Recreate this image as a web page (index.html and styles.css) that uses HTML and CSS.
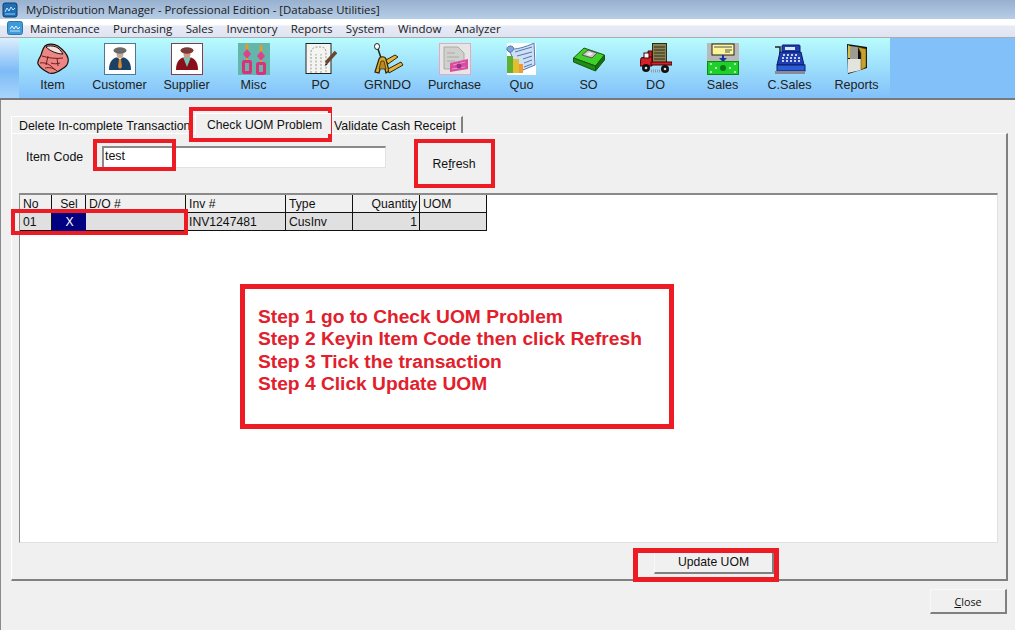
FILE: index.html
```html
<!DOCTYPE html>
<html lang="en">
<head>
  <meta charset="UTF-8">
  <meta name="viewport" content="width=device-width, initial-scale=1.0">
  <title>MyDistribution Manager - Professional Edition - [Database Utilities]</title>
  <link rel="stylesheet" href="styles.css">
</head>
<body>
  <div class="app">

    <div class="titlebar">
      <svg class="app-icon" width="16" height="16" viewBox="0 0 16 16"><rect x="1" y="1" width="14" height="14" rx="2" fill="#1f6fb5" stroke="#0d3f73"/><path d="M3 10l2-4 2 3 2-4 2 3 2-2" fill="none" stroke="#cfe9ff"/><path d="M3 12h10" stroke="#8fd0ff"/></svg>
      <span>MyDistribution Manager - Professional Edition - [Database Utilities]</span>
    </div>

    <div class="menubar">
      <svg class="menu-icon" width="16" height="16" viewBox="0 0 16 16"><rect x="0.5" y="1.5" width="15" height="13" rx="2" fill="#3f9ad8" stroke="#2a78b8"/><path d="M3 9l2-3 2 3 2-3 2 3 2-2" fill="none" stroke="#e6f6ff"/><path d="M3 11h10" stroke="#bfe6ff"/></svg>
      <span>Maintenance</span>
      <span>Purchasing</span>
      <span>Sales</span>
      <span>Inventory</span>
      <span>Reports</span>
      <span>System</span>
      <span>Window</span>
      <span>Analyzer</span>
    </div>

    <div class="toolbar">
      <div class="toolbar-edge"></div>
      <div class="tools">
        <div class="tool">
          <svg viewBox="0 0 32 32"><path d="M8 3c3-3 9-2 13 0 4 3 9 8 10 12 1 5-2 9-6 11-4 3-9 5-13 4-4-2-9-5-11-9-1-4 2-6 3-9 1-3 2-7 4-9z" fill="#ec8684" stroke="#111" stroke-width="1.200"/><path d="M9 4c3-2 9-1 12 1 2 2 4 4 5 6-6 0-13-3-17-7z" fill="#f4e0dc" stroke="#111"/><path d="M5 13c6 2 14 3 21 2M3 20c6-1 11 2 15 7M11 13l-2 9M20 15l1 8M8 25c4-1 9 0 12 3M14 20c3 1 6 1 9 0" fill="none" stroke="#6e1c1c"/></svg>
          <span>Item</span>
        </div>
        <div class="tool">
          <svg viewBox="0 0 32 32"><rect x="0.500" y="0.500" width="31" height="31" fill="#fff" stroke="#4f7696"/><path d="M5 27c0-9 4-13 11-13s11 4 11 13z" fill="#1a4266"/><path d="M13 14h6l-3 3z" fill="#e8e8e0"/><path d="M15 16h2l1 8-2 2-2-2z" fill="#e08a30"/><ellipse cx="16" cy="11" rx="3.500" ry="4" fill="#c9ab92"/><ellipse cx="16" cy="7.500" rx="6.500" ry="3.200" fill="#6a6a6a"/></svg>
          <span>Customer</span>
        </div>
        <div class="tool">
          <svg viewBox="0 0 32 32"><rect x="0.500" y="0.500" width="31" height="31" fill="#fff" stroke="#8c3a44"/><path d="M5 27c0-9 4-13 11-13s11 4 11 13z" fill="#8a0f1c"/><path d="M12 14h8l-4 10z" fill="#6fc7b5"/><ellipse cx="16" cy="11" rx="3.500" ry="4" fill="#cf9a86"/><ellipse cx="16" cy="7.500" rx="6.500" ry="3.200" fill="#7a3a36"/></svg>
          <span>Supplier</span>
        </div>
        <div class="tool">
          <svg viewBox="0 0 32 32"><rect width="32" height="32" fill="#62b6ac"/><path d="M9 1v6M23 2v7" stroke="#d9a030" stroke-width="3"/><path d="M9 6l4 5-4 5-4-5zM23 8l4 5-4 5-4-5z" fill="#e0408a"/><path d="M9 15v4M23 17v4" stroke="#d9a030" stroke-width="2"/><rect x="5.500" y="18.500" width="7" height="11" rx="1" fill="none" stroke="#dc2f7c" stroke-width="3"/><rect x="19.500" y="20.500" width="7" height="10" rx="1" fill="none" stroke="#dc2f7c" stroke-width="3"/></svg>
          <span>Misc</span>
        </div>
        <div class="tool">
          <svg viewBox="0 0 32 32"><rect x="1" y="0.500" width="25" height="30" fill="#f4f4f0" stroke="#222"/><path d="M6 30V9c0-3 3-5 6-5h4c3 0 5 2 5 5v21M11 30V11M16 30V11" fill="none" stroke="#999" stroke-dasharray="2 1.500"/><path d="M21 20L31 9" stroke="#6b4630" stroke-width="3.500"/><path d="M21 20l-1.500 3 3-1.500z" fill="#222"/></svg>
          <span>PO</span>
        </div>
        <div class="tool">
          <svg viewBox="0 0 32 32"><ellipse cx="5" cy="3.500" rx="2.500" ry="3" fill="#fff" stroke="#222"/><path d="M6 6l3 9" stroke="#222" stroke-width="1.500"/><path d="M3 29l4-13c1-3 6-3 7 0l3 12-3 2-2-8h-3l-2 8z" fill="#dca92c" stroke="#2e2206" stroke-width="1.200"/><path d="M7 26l2-8h3l2 8z" fill="#b98a1c" stroke="#2e2206" stroke-width="0.700"/><path d="M14 17l9-5 3 2-10 7zM16 26l13-7 2 3-14 8z" fill="#e4b53a" stroke="#2e2206"/></svg>
          <span>GRNDO</span>
        </div>
        <div class="tool">
          <svg viewBox="0 0 32 32"><rect x="0.500" y="0.500" width="31" height="31" fill="#e8e6e4" stroke="#e8a8c4"/><path d="M5 4h14l6 6v16H5z" fill="#d0d0cc" stroke="#aaa"/><path d="M8 10h8M8 14h12M8 18h8" stroke="#aaa"/><path d="M11 20l18-4v10l-18 3z" fill="#d84fa0"/><path d="M14 22l12-3M13 26l13-2" stroke="#f08fc8"/><circle cx="20" cy="23" r="2.500" fill="#9a2f8c"/></svg>
          <span>Purchase</span>
        </div>
        <div class="tool">
          <svg viewBox="0 0 32 32"><rect x="1" y="0" width="29" height="32" fill="#fff"/><path d="M3 6c6 1 17-2 25-6l1 22-17 7z" fill="#cfe0f5" stroke="#4f77b0"/><path d="M1 7c-1-4 4-5 6-3s-1 6-4 5z" fill="#7fa6da" stroke="#4f77b0"/><path d="M9 9l17-5M11 13l15-4M17 16l9-3M18 20l8-3M18 24l8-3" stroke="#4f77b0"/><rect x="1" y="13" width="6" height="17" fill="#5fb030"/><rect x="7" y="16" width="6" height="14" fill="#e0c030"/><rect x="13" y="21" width="4" height="9" fill="#f09a30"/></svg>
          <span>Quo</span>
        </div>
        <div class="tool">
          <svg viewBox="0 0 32 32"><path d="M0.500 15L11 5l20.500 7-9 11z" fill="#3fd02a" stroke="#14590c"/><path d="M0.500 15v4l22 9v-5z" fill="#1f8c16" stroke="#14590c"/><path d="M22.500 23v5l9-11v-5z" fill="#16700f" stroke="#14590c"/><path d="M9 12l6-5 9 3-5 5z" fill="#c6c6c0" stroke="#555"/><path d="M13 11l4-2 3 2-4 2z" fill="#eee"/></svg>
          <span>SO</span>
        </div>
        <div class="tool">
          <svg viewBox="0 0 32 32"><rect x="12.500" y="0.500" width="14" height="19" fill="#8a8256" stroke="#2e2a10"/><path d="M14 4h11M14 7h11M14 10h11M14 13h11M14 16h11" stroke="#2e2a10"/><path d="M8 8h4v10H8z" fill="#d8202a" stroke="#400"/><path d="M1 15l4-1h7v9H0z" fill="#d8202a" stroke="#400"/><rect x="4" y="10" width="5" height="5" fill="#fff" stroke="#400"/><path d="M11 19h21v3H11z" fill="#d8202a" stroke="#400"/><path d="M11 28h10" stroke="#999" stroke-width="3" stroke-dasharray="1 1"/><circle cx="6" cy="25" r="4" fill="#111"/><circle cx="25" cy="26" r="4" fill="#111"/><circle cx="6" cy="25" r="1.300" fill="#ddd"/><circle cx="25" cy="26" r="1.300" fill="#ddd"/></svg>
          <span>DO</span>
        </div>
        <div class="tool">
          <svg viewBox="0 0 32 32"><rect width="32" height="19" fill="#b9b9b9"/><rect x="5" y="1" width="22" height="11" fill="#fdf59a" stroke="#222"/><path d="M7 4h18M18 7h7M18 9h5" stroke="#555"/><path d="M16 12v5" stroke="#1530a8" stroke-width="2"/><path d="M12 15h8l-4 4z" fill="#1530a8"/><rect x="0.500" y="18.500" width="31" height="13" fill="#1fd02a" stroke="#0a8a12"/><circle cx="16" cy="25" r="3" fill="#0a7a12"/><path d="M3 21h2M27 21h2M3 29h2M27 29h2M8 25h2M22 25h2" stroke="#e0ffe0" stroke-width="1.500"/></svg>
          <span>Sales</span>
        </div>
        <div class="tool">
          <svg viewBox="0 0 32 32"><path d="M1 4h5v8" fill="none" stroke="#222" stroke-width="1.500"/><rect x="8" y="2" width="18" height="7" rx="1" fill="#1f3fb0" stroke="#0c1c66"/><rect x="11" y="4" width="10" height="3" fill="#dde6ff"/><path d="M6 9h21l3 13H3z" fill="#1f3fb0" stroke="#0c1c66"/><path d="M9 12h2M13 12h2M17 12h2M21 12h2M8 15h2M12 15h2M16 15h2M20 15h2M24 15h2M8 18h2M12 18h2M16 18h2M20 18h2M24 18h2" stroke="#fff" stroke-width="1.500"/><rect x="3" y="22" width="28" height="6" fill="#2a5cd8" stroke="#0c1c66"/><rect x="1" y="28" width="30" height="3" fill="#8a8a96"/></svg>
          <span>C.Sales</span>
        </div>
        <div class="tool">
          <svg viewBox="0 0 32 32"><path d="M6 1l20 3v21l-19 6z" fill="#111"/><path d="M7 2l2 1v12H7z" fill="#d8c040"/><path d="M9 3l8 1v12H9z" fill="#9c9c90"/><path d="M7 16h13v11L7 30z" fill="#e4e4de"/><path d="M17 4l8 2v18l-5 3V10z" fill="#c8a030" stroke="#5e4a10" stroke-width="0.600"/></svg>
          <span>Reports</span>
        </div>
      </div>
    </div>

    <div class="main">
      <div class="tabs">
        <div class="tab">Delete In-complete Transaction</div>
        <div class="tab tab-active">Check UOM Problem</div>
        <div class="tab tab-last">Validate Cash Receipt</div>
      </div>

      <div class="pane">
        <div class="filter">
          <label class="filter-label" for="itemCode">Item Code</label>
          <input class="filter-input" type="text" id="itemCode" value="test">
          <button class="flat-btn" type="button">Re<u>f</u>resh</button>
        </div>

        <div class="grid-box">
          <table class="grid">
            <colgroup>
              <col class="col-no"><col class="col-sel"><col class="col-wide"><col class="col-wide">
              <col class="col-mid"><col class="col-mid"><col class="col-mid">
            </colgroup>
            <thead>
              <tr>
                <th>No</th>
                <th class="center">Sel</th>
                <th>D/O #</th>
                <th>Inv #</th>
                <th>Type</th>
                <th class="right">Quantity</th>
                <th>UOM</th>
              </tr>
            </thead>
            <tbody>
              <tr>
                <td>01</td>
                <td class="center picked">X</td>
                <td></td>
                <td>INV1247481</td>
                <td>CusInv</td>
                <td class="right">1</td>
                <td></td>
              </tr>
            </tbody>
          </table>
        </div>

        <div class="pane-foot">
          <button class="raised-btn update-btn" type="button">Update UOM</button>
        </div>
      </div>

      <div class="main-foot">
        <button class="raised-btn close-btn" type="button"><u>C</u>lose</button>
      </div>
    </div>

    <!-- red marks drawn on top of the screenshot -->
    <div class="mark mark-tab"></div>
    <div class="mark mark-input"></div>
    <div class="mark mark-refresh"></div>
    <div class="mark mark-row"></div>
    <div class="mark mark-update"></div>
    <div class="steps">
      <div>Step 1 go to Check UOM Problem</div>
      <div>Step 2 Keyin Item Code then click Refresh</div>
      <div>Step 3 Tick the transaction</div>
      <div>Step 4 Click Update UOM</div>
    </div>

  </div>
</body>
</html>
```

FILE: styles.css
```css
* {
  box-sizing: border-box;
}

html, body {
  margin: 0;
  padding: 0;
}

body {
  font-family: "Liberation Sans", Arial, sans-serif;
  font-size: 12px;
  color: #111;
  background-color: #f0f0f0;
}

.app {
  position: relative;
  width: 1015px;
  height: 630px;
  display: flex;
  flex-direction: column;
  overflow: hidden;
}

.titlebar {
  height: 19px;
  display: flex;
  align-items: center;
  gap: 8px;
  padding-left: 2px;
  font-family: "Open Sans", sans-serif;
  font-size: 11.4px;
  color: #1a1a1a;
  background: linear-gradient(#98b1cf, #b6cde6);
}

.menubar {
  height: 19px;
  display: flex;
  align-items: center;
  gap: 13.3px;
  padding-left: 7px;
  font-family: "Open Sans", sans-serif;
  font-size: 11.5px;
  color: #1a1a1a;
  background: linear-gradient(#fff 0, #fff 30%, #e8ebf6 40%, #dfe3f2 100%);
  border-bottom: 1px solid #a8abb0;
}

.menu-icon {
  margin-right: -6.300px;
}

.toolbar {
  height: 62px;
  display: flex;
  background-color: #82c0fa;
  border-bottom: 2px solid #77797c;
}

.toolbar-edge {
  width: 19px;
  background: linear-gradient(#dceefc, #7dbbf7 55%, #a8d4fb);
}

.tools {
  width: 871px;
  display: grid;
  grid-template-columns: repeat(13, 67px);
  background: linear-gradient(#b8fcfd, #82c0fa);
}

.tool {
  display: flex;
  flex-direction: column;
  align-items: center;
  padding-top: 5px;
  font-size: 12.6px;
  color: #222;
}

.tool svg {
  width: 32px;
  height: 32px;
  margin-bottom: 3px;
}

.main {
  flex: 1;
  padding: 13px 8px 0 10px;
  border-left: 1px solid #8a8a8a;
}

.tabs {
  height: 20px;
  display: flex;
  align-items: flex-end;
}

.tab {
  height: 17px;
  width: 184px;
  padding: 2px 0 0 7px;
  font-size: 12.4px;
  border-top: 1px solid #fff;
  border-left: 1px solid #fff;
  white-space: nowrap;
}

.tab-active {
  position: relative;
  z-index: 1;
  width: 136px;
  height: 21px;
  margin-bottom: -1px;
  padding: 4px 0 0 11px;
  font-size: 12.2px;
  background-color: #f0f0f0;
}

.tab-last {
  width: 132px;
  padding-left: 3px;
  border-left: none;
  border-right: 2px solid #808080;
}

.pane {
  height: 448px;
  width: 997px;
  padding: 10px 0 0 7px;
  border-top: 1px solid #fff;
  border-left: 1px solid #fff;
  border-right: 2px solid #808080;
  border-bottom: 2px solid #808080;
}

.filter {
  height: 49px;
  display: flex;
  align-items: flex-start;
}

.filter-label {
  width: 76px;
  margin: 6px 0 0 7px;
  font-size: 12.4px;
}

.filter-input {
  width: 284px;
  height: 22px;
  margin-top: 2px;
  padding: 0 0 4px 1px;
  font-family: "Liberation Sans", Arial, sans-serif;
  font-size: 12.4px;
  color: #111;
  background-color: #fff;
  border: 1px solid #e2e2e2;
  border-top: 2px solid #8a8a8a;
  border-left: 2px solid #8a8a8a;
  outline: none;
}

.flat-btn {
  width: 74px;
  height: 40px;
  margin-left: 31px;
  padding: 0;
  font-family: "Liberation Sans", Arial, sans-serif;
  font-size: 12.3px;
  color: #111;
  background: none;
  border: none;
}

.grid-box {
  width: 979px;
  height: 350px;
  background-color: #fff;
  border-top: 2px solid #8a8a8a;
  border-left: 1px solid #8a8a8a;
  border-right: 1px solid #e0e0e0;
  border-bottom: 1px solid #e0e0e0;
}

.grid {
  border-collapse: separate;
  border-spacing: 0;
  table-layout: fixed;
  width: 467px;
  font-size: 12.2px;
}

.col-no { width: 32px; }
.col-sel { width: 34px; }
.col-wide { width: 100px; }
.col-mid { width: 67px; }

.grid th,
.grid td {
  height: 18px;
  padding: 0 2px 0 3px;
  font-weight: normal;
  text-align: left;
  border-right: 1px solid #111;
  border-bottom: 1px solid #111;
  white-space: nowrap;
  overflow: hidden;
}

.grid th {
  background-color: #f0f0f0;
}

.grid td {
  background-color: #e0e0e0;
}

.grid .center { text-align: center; }
.grid .right { text-align: right; }

.grid td.picked {
  color: #fff;
  background-color: #000080;
  border-right: none;
  border-bottom: 1px solid #000080;
}

.pane-foot {
  display: flex;
  padding: 9px 0 0 635px;
}

.raised-btn {
  padding: 0;
  font-family: "Liberation Sans", Arial, sans-serif;
  font-size: 12.2px;
  color: #111;
  background-color: #f0f0f0;
  border: 1px solid #f8f8f8;
  border-right: 2px solid #808080;
  border-bottom: 2px solid #808080;
}

.update-btn {
  width: 120px;
  height: 22px;
  padding-bottom: 2px;
}

.main-foot {
  display: flex;
  justify-content: flex-end;
  padding-top: 8px;
}

.close-btn {
  width: 77px;
  height: 25px;
  font-family: "Open Sans", sans-serif;
  font-size: 10.8px;
}

.mark {
  position: absolute;
  border: 4px solid #ed1c24;
}

.mark-tab { left: 189px; top: 107px; width: 143px; height: 35px; }
.mark-input { left: 93px; top: 139px; width: 83px; height: 32px; }
.mark-refresh { left: 414px; top: 139px; width: 81px; height: 49px; }
.mark-row { left: 11px; top: 209px; width: 177px; height: 26px; }
.mark-update { left: 633px; top: 548px; width: 146px; height: 34px; border-width: 5px; }

.steps {
  position: absolute;
  left: 240px;
  top: 284px;
  width: 434px;
  height: 145px;
  padding: 17px 0 0 13px;
  font-size: 19.2px;
  font-weight: bold;
  line-height: 22.300px;
  color: #e2202c;
  background-color: #fff;
  border: 5px solid #ed1c24;
}
```
